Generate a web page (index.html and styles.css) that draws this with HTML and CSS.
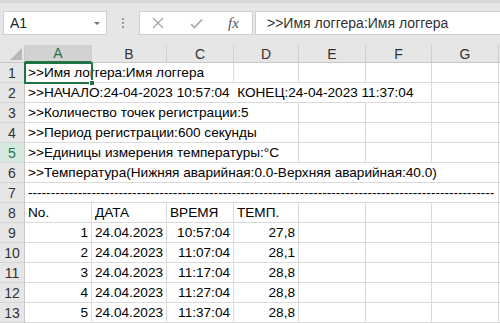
FILE: index.html
```html
<!DOCTYPE html>
<html lang="ru">
<head>
<meta charset="utf-8">
<link rel="stylesheet" href="styles.css">
</head>
<body>
<div class="app">
  <div class="topstrip"></div>
  <div class="toolbar">
    <div class="namebox">
      <span class="nb-text">A1</span>
      <span class="nb-arrow"></span>
    </div>
    <div class="dots"><i></i><i></i><i></i></div>
    <div class="fbtns">
      <svg class="ic-x" width="12" height="12" viewBox="0 0 12 12"><path d="M1 1 L11 11 M11 1 L1 11" stroke="#a6a6a6" stroke-width="1.3" fill="none"/></svg>
      <svg class="ic-ok" width="13" height="11" viewBox="0 0 13 11"><path d="M1 6 L4.5 9.5 L12 1.5" stroke="#a6a6a6" stroke-width="1.6" fill="none"/></svg>
      <span class="fx">fx</span>
    </div>
    <div class="finput">&gt;&gt;Имя логгера:Имя логгера</div>
  </div>
  <div class="sheet">
    <div class="corner"><span class="tri"></span></div>
    <div class="ch sel">A</div>
    <div class="ch">B</div>
    <div class="ch">C</div>
    <div class="ch">D</div>
    <div class="ch">E</div>
    <div class="ch">F</div>
    <div class="ch">G</div>
    <div class="ch last"></div>

    <div class="rh">1</div>
    <div class="c span3">&gt;&gt;Имя логгера:Имя логгера</div>
    <div class="c"></div><div class="c"></div><div class="c"></div><div class="c"></div><div class="c last"></div>

    <div class="rh">2</div>
    <div class="c span6">&gt;&gt;НАЧАЛО:24-04-2023 10:57:04  КОНЕЦ:24-04-2023 11:37:04</div>
    <div class="c"></div><div class="c last"></div>

    <div class="rh">3</div>
    <div class="c span4">&gt;&gt;Количество точек регистрации:5</div>
    <div class="c"></div><div class="c"></div><div class="c"></div><div class="c last"></div>

    <div class="rh">4</div>
    <div class="c span4">&gt;&gt;Период регистрации:600 секунды</div>
    <div class="c"></div><div class="c"></div><div class="c"></div><div class="c last"></div>

    <div class="rh hl">5</div>
    <div class="c span4">&gt;&gt;Единицы измерения температуры:°C</div>
    <div class="c"></div><div class="c"></div><div class="c"></div><div class="c last"></div>

    <div class="rh">6</div>
    <div class="c span7">&gt;&gt;Температура(Нижняя аварийная:0.0-Верхняя аварийная:40.0)</div>
    <div class="c last"></div>

    <div class="rh">7</div>
    <div class="c span7 dash">-------------------------------------------------------------------------------------------------------</div>
    <div class="c last"></div>

    <div class="rh">8</div>
    <div class="c">No.</div><div class="c">ДАТА</div><div class="c">ВРЕМЯ</div><div class="c">ТЕМП.</div>
    <div class="c"></div><div class="c"></div><div class="c"></div><div class="c last"></div>

    <div class="rh">9</div>
    <div class="c r">1</div><div class="c">24.04.2023</div><div class="c r">10:57:04</div><div class="c r">27,8</div>
    <div class="c"></div><div class="c"></div><div class="c"></div><div class="c last"></div>

    <div class="rh">10</div>
    <div class="c r">2</div><div class="c">24.04.2023</div><div class="c r">11:07:04</div><div class="c r">28,1</div>
    <div class="c"></div><div class="c"></div><div class="c"></div><div class="c last"></div>

    <div class="rh">11</div>
    <div class="c r">3</div><div class="c">24.04.2023</div><div class="c r">11:17:04</div><div class="c r">28,8</div>
    <div class="c"></div><div class="c"></div><div class="c"></div><div class="c last"></div>

    <div class="rh">12</div>
    <div class="c r">4</div><div class="c">24.04.2023</div><div class="c r">11:27:04</div><div class="c r">28,8</div>
    <div class="c"></div><div class="c"></div><div class="c"></div><div class="c last"></div>

    <div class="rh">13</div>
    <div class="c r">5</div><div class="c">24.04.2023</div><div class="c r">11:37:04</div><div class="c r">28,8</div>
    <div class="c"></div><div class="c"></div><div class="c"></div><div class="c last"></div>

    <div class="selbox"><span class="handle"></span></div>
  </div>
</div>
</body>
</html>
```

FILE: styles.css
```css
* { box-sizing: border-box; }
html, body { margin: 0; padding: 0; }
body {
  width: 500px;
  height: 323px;
  overflow: hidden;
  background: #e6e6e6;
  font-family: "Liberation Sans", Arial, sans-serif;
}
.app { width: 500px; height: 323px; overflow: hidden; }
.topstrip { height: 3px; background: #d6d6d6; }
.toolbar {
  height: 42px;
  display: flex;
  align-items: flex-start;
  padding-top: 8px;
  padding-left: 3px;
}
.namebox {
  width: 104px;
  height: 24px;
  background: #fff;
  border: 1px solid #d0d0d0;
  display: flex;
  align-items: center;
  justify-content: space-between;
  padding: 0 6px 0 6px;
  font-size: 14px;
  color: #222;
}
.nb-arrow {
  width: 0; height: 0;
  border-left: 3px solid transparent;
  border-right: 3px solid transparent;
  border-top: 3px solid #777;
}
.dots {
  width: 32px;
  height: 24px;
  display: flex;
  flex-direction: column;
  align-items: center;
  justify-content: center;
  gap: 2px;
}
.dots i { width: 2px; height: 2px; background: #9a9a9a; display: block; }
.fbtns {
  width: 114px;
  height: 24px;
  background: #fff;
  border: 1px solid #d0d0d0;
  display: flex;
  align-items: center;
  padding-left: 12px;
}
.ic-x { margin-right: 26px; }
.ic-ok { margin-right: 25px; }
.fx {
  font-family: "Liberation Serif", "DejaVu Serif", serif;
  font-style: italic;
  font-size: 15px;
  color: #555;
}
.finput {
  flex: 1;
  height: 24px;
  margin-left: 2px;
  background: #fff;
  border: 1px solid #d0d0d0;
  border-right: none;
  display: flex;
  align-items: center;
  padding-left: 11px;
  font-size: 14px;
  color: #333;
}
.sheet {
  position: relative;
  display: grid;
  grid-template-columns: 25px 67px 75px 67px 65px 67px 66px 67px 1fr;
  grid-template-rows: 18px;
  grid-auto-rows: 20px;
  background: #fff;
}
.corner {
  background: #e6e6e6;
  border-right: 1px solid #c8c8c8;
  border-bottom: 1px solid #c8c8c8;
  position: relative;
}
.tri {
  position: absolute;
  right: 2px;
  bottom: 2px;
  width: 0; height: 0;
  border-left: 12px solid transparent;
  border-bottom: 12px solid #b8b8b8;
}
.ch {
  background: #e6e6e6;
  border-right: 1px solid #cfcfcf;
  border-bottom: 1px solid #c8c8c8;
  display: flex;
  align-items: center;
  justify-content: center;
  font-size: 14px;
  color: #333;
  line-height: 1;
}
.ch.sel { background: #d2d2d2; color: #217346; border-bottom: 2px solid #217346; }
.ch.last { border-right: none; }
.rh {
  background: #e6e6e6;
  border-right: 1px solid #c8c8c8;
  border-bottom: 1px solid #d6d6d6;
  display: flex;
  align-items: center;
  justify-content: center;
  font-size: 14px;
  color: #333;
  padding-top: 1px;
}
.rh.hl { background: #d3eadc; color: #217346; }
.c {
  border-right: 1px solid #dadada;
  border-bottom: 1px solid #dadada;
  font-size: 13.6px;
  color: #000;
  white-space: pre;
  overflow: hidden;
  display: flex;
  align-items: flex-end;
  padding: 0 3px 1px 3px;
  line-height: 17px;
}
.c.last { border-right: none; }
.c.r { justify-content: flex-end; }
.span3 { grid-column: span 3; }
.span4 { grid-column: span 4; }
.span6 { grid-column: span 6; }
.span7 { grid-column: span 7; }
.selbox {
  position: absolute;
  left: 24px;
  top: 17px;
  width: 69px;
  height: 22px;
  border: 2px solid #217346;
  pointer-events: none;
}
.handle {
  position: absolute;
  right: -4px;
  bottom: -4px;
  width: 6px;
  height: 6px;
  background: #217346;
  border: 1px solid #fff;
}
```
